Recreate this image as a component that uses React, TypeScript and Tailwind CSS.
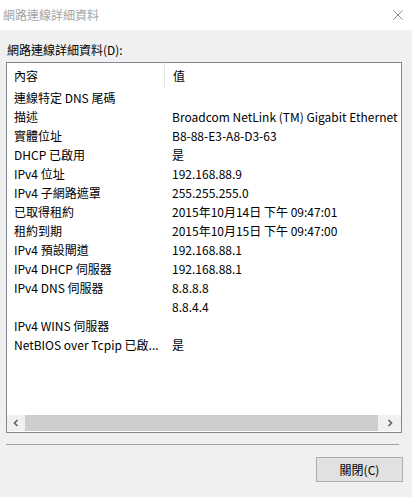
import React from 'react';

const rows: [string, string][] = [
    ['連線特定 DNS 尾碼', ''],
    ['描述', 'Broadcom NetLink (TM) Gigabit Ethernet'],
    ['實體位址', 'B8-88-E3-A8-D3-63'],
    ['DHCP 已啟用', '是'],
    ['IPv4 位址', '192.168.88.9'],
    ['IPv4 子網路遮罩', '255.255.255.0'],
    ['已取得租約', '2015年10月14日 下午 09:47:01'],
    ['租約到期', '2015年10月15日 下午 09:47:00'],
    ['IPv4 預設閘道', '192.168.88.1'],
    ['IPv4 DHCP 伺服器', '192.168.88.1'],
    ['IPv4 DNS 伺服器', '8.8.8.8'],
    ['', '8.8.4.4'],
    ['IPv4 WINS 伺服器', ''],
    ['NetBIOS over Tcpip 已啟...', '是'],
];

const font = { fontFamily: '"Noto Sans CJK TC", "Noto Sans", sans-serif' };

const App = () => {
    return (
        <div className="w-[412px] h-[497px] flex flex-col bg-[#f0f0f0] text-[12px] text-black overflow-hidden" style={font}>
            {/* Title bar */}
            <div className="h-[30px] bg-white flex items-center justify-between pl-[3px] pr-[8px]">
                <span className="text-[#a3a3a3] leading-[16px]">網路連線詳細資料</span>
                <svg width="10" height="10" viewBox="0 0 10 10" className="mr-[1px]">
                    <path d="M0.5 0.5 L9.5 9.5 M9.5 0.5 L0.5 9.5" stroke="#8a8a8a" strokeWidth="1" />
                </svg>
            </div>

            {/* Body */}
            <div className="flex-1 flex flex-col px-[6px]">
                <div className="pt-[12px] pl-[1px] leading-[16px]">網路連線詳細資料(D):</div>

                {/* List view */}
                <div className="mt-[4px] w-[396px] h-[371px] border border-[#828790] bg-white flex flex-col">
                    <div className="flex-1 flex flex-col">
                        <div className="h-[25px] flex items-stretch">
                            <div className="w-[157px] pl-[7px] flex items-center">內容</div>
                            <div className="w-px bg-[#e5e5e5]" />
                            <div className="pl-[8px] flex items-center">值</div>
                        </div>
                        {rows.map(([name, value], i) => (
                            <div key={i} className="h-[19px] flex items-center">
                                <div className="w-[158px] pl-[7px] pr-[2px] truncate">{name}</div>
                                <div className="pl-[7px] whitespace-nowrap">{value}</div>
                            </div>
                        ))}
                    </div>

                    {/* Horizontal scrollbar */}
                    <div className="h-[16px] mb-[1px] flex bg-[#f0f0f0]">
                        <div className="w-[18px] flex items-center justify-center">
                            <svg width="8" height="8" viewBox="0 0 8 8">
                                <path d="M5.5 1 L2.5 4 L5.5 7" fill="none" stroke="#606060" strokeWidth="1.6" />
                            </svg>
                        </div>
                        <div className="w-[353px] bg-[#cdcdcd]" />
                        <div className="flex-1 flex items-center justify-center">
                            <svg width="8" height="8" viewBox="0 0 8 8">
                                <path d="M2.5 1 L5.5 4 L2.5 7" fill="none" stroke="#606060" strokeWidth="1.6" />
                            </svg>
                        </div>
                    </div>
                </div>

                <div className="mt-[11px] h-px w-[393px] bg-[#a0a0a0]" />

                <div className="mt-[12px] flex justify-end pr-[3px]">
                    <button className="w-[87px] h-[25px] bg-[#e1e1e1] border border-[#adadad] flex items-center justify-center leading-[16px]">
                        關閉(C)
                    </button>
                </div>
            </div>
        </div>
    );
};

export default App;
